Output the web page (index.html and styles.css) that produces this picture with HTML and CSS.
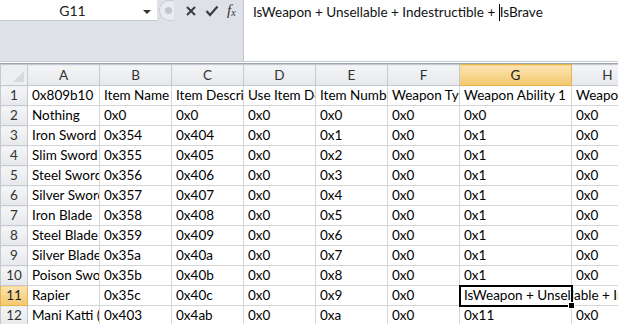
FILE: index.html
```html
<!DOCTYPE html>
<html lang="en">
<head>
<meta charset="UTF-8">
<title>Items</title>
<link rel="stylesheet" href="styles.css">
</head>
<body>
<div class="formula-bar">
    <div class="left-part">
        <div class="top-row">
            <div class="name-box">
                <span class="cell-ref">G11</span>
                <span class="drop-arrow"></span>
            </div>
            <div class="buttons">
                <span class="grip"><span class="dot"></span></span>
                <svg class="btn-icon" width="12" height="12" viewBox="0 0 12 12"><path d="M2 2 L10 10 M10 2 L2 10" stroke="#3c3c3c" stroke-width="2"/></svg>
                <svg class="btn-icon check" width="14" height="12" viewBox="0 0 14 12"><path d="M1.5 6 L5 10 L12.5 1.5" stroke="#3c3c3c" stroke-width="2.2" fill="none"/></svg>
                <span class="fx">f<sub>x</sub></span>
            </div>
        </div>
    </div>
    <div class="formula-input">IsWeapon + Unsellable + Indestructible + <span class="caret"></span>IsBrave</div>
</div>
<div class="splitter"></div>

<table class="sheet">
    <colgroup>
        <col class="c-head">
        <col class="c-std"><col class="c-std"><col class="c-std"><col class="c-std">
        <col class="c-std"><col class="c-std">
        <col class="c-wide">
        <col class="c-std">
    </colgroup>
    <thead>
        <tr>
            <th class="corner"><span class="tri"></span></th>
            <th>A</th><th>B</th><th>C</th><th>D</th><th>E</th><th>F</th><th class="sel">G</th><th>H</th>
        </tr>
    </thead>
    <tbody id="rows"></tbody>
</table>

<script>
    var data = [
        ['0x809b10', 'Item Name', 'Item Description', 'Use Item Desc', 'Item Number', 'Weapon Type', 'Weapon Ability 1', 'Weapon Ability 2'],
        ['Nothing', '0x0', '0x0', '0x0', '0x0', '0x0', '0x0', '0x0'],
        ['Iron Sword', '0x354', '0x404', '0x0', '0x1', '0x0', '0x1', '0x0'],
        ['Slim Sword', '0x355', '0x405', '0x0', '0x2', '0x0', '0x1', '0x0'],
        ['Steel Sword', '0x356', '0x406', '0x0', '0x3', '0x0', '0x1', '0x0'],
        ['Silver Sword', '0x357', '0x407', '0x0', '0x4', '0x0', '0x1', '0x0'],
        ['Iron Blade', '0x358', '0x408', '0x0', '0x5', '0x0', '0x1', '0x0'],
        ['Steel Blade', '0x359', '0x409', '0x0', '0x6', '0x0', '0x1', '0x0'],
        ['Silver Blade', '0x35a', '0x40a', '0x0', '0x7', '0x0', '0x1', '0x0'],
        ['Poison Sword', '0x35b', '0x40b', '0x0', '0x8', '0x0', '0x1', '0x0'],
        ['Rapier', '0x35c', '0x40c', '0x0', '0x9', '0x0', 'IsWeapon + Unsellable + Indestructible + IsBrave', ''],
        ['Mani Katti (', '0x403', '0x4ab', '0x0', '0xa', '0x0', '0x11', '0x0']
    ];

    var body = document.getElementById('rows');
    data.forEach(function(row, i) {
        var tr = document.createElement('tr');
        var th = document.createElement('th');
        th.textContent = i + 1;
        if (i == 10) th.className = 'sel';
        tr.appendChild(th);
        row.forEach(function(val, j) {
            var td = document.createElement('td');
            td.textContent = val;
            if (i == 10 && j == 6) td.className = 'active';
            tr.appendChild(td);
        });
        body.appendChild(tr);
    });
</script>
</body>
</html>
```

FILE: styles.css
```css
body {
    margin: 0;
    width: 618px;
    height: 324px;
    overflow: hidden;
    background: #fff;
    font-family: Lato, "Open Sans", sans-serif;
    font-size: 13.5px;
    color: #000;
}

.formula-bar {
    display: flex;
    height: 61px;
    background: #dee2e8;
}

.left-part {
    width: 243px;
}

.top-row {
    display: flex;
    height: 21px;
}

.name-box {
    width: 157px;
    background: #fff;
    position: relative;
    text-align: center;
    line-height: 22px;
    border-bottom: 1px solid #c6ccd4;
    box-sizing: border-box;
    font-size: 14px;
}

.cell-ref {
    margin-right: 12px;
    color: #222;
}

.drop-arrow {
    position: absolute;
    right: 6px;
    top: 10px;
    border-left: 4px solid transparent;
    border-right: 4px solid transparent;
    border-top: 4px solid #333;
}

.buttons {
    flex: 1;
    display: flex;
    align-items: center;
}

.grip {
    width: 14px;
    height: 19px;
    margin-left: 2px;
    border-radius: 10px 0 0 10px;
    border: 1px solid #c9ced6;
    border-right: none;
    background: #e8ebef;
    display: flex;
    align-items: center;
    justify-content: center;
}

.grip .dot {
    width: 7px;
    height: 7px;
    border-radius: 50%;
    background: #c3c6ca;
    margin-left: 3px;
}

.btn-icon {
    margin-left: 11px;
}

.btn-icon.check {
    margin-left: 8px;
}

.fx {
    font-family: "Liberation Serif", serif;
    font-style: italic;
    font-size: 15px;
    margin-left: 8px;
    color: #333;
}

.fx sub {
    font-size: 10px;
    vertical-align: -1px;
}

.formula-input {
    flex: 1;
    background: #fff;
    border-left: 1px solid #c3c8cf;
    padding: 2px 0 0 9px;
    line-height: 20px;
    color: #111;
}

.caret {
    display: inline-block;
    width: 1px;
    height: 17px;
    background: #000;
    vertical-align: -4px;
}

.splitter {
    height: 3px;
    background: #fff;
    border-top: 1px solid #c7ccd3;
    border-bottom: 1px solid #9ea5ae;
    box-sizing: border-box;
}

.sheet {
    border-collapse: collapse;
    table-layout: fixed;
    width: 643px;
}

.c-head { width: 27px; }
.c-std { width: 72px; }
.c-wide { width: 112px; }

.sheet th {
    height: 19px;
    padding: 0;
    font-weight: normal;
    color: #333;
    background: linear-gradient(#f4f5f7, #e6e8eb);
    border: 1px solid #c5c9cf;
    text-align: center;
    line-height: 19px;
}

.sheet thead th {
    height: 20px;
}

.sheet th.corner {
    position: relative;
    background: #eceef1;
}

.tri {
    position: absolute;
    right: 3px;
    bottom: 3px;
    border-left: 11px solid transparent;
    border-bottom: 11px solid #d6d9dd;
}

.sheet th.sel {
    background: linear-gradient(#fbe4b2, #f2c86e);
    border-color: #e7b54d;
    color: #222;
}

.sheet td {
    height: 19px;
    padding: 0 0 0 4px;
    border: 1px solid #d6d6d6;
    white-space: nowrap;
    overflow: hidden;
    line-height: 19px;
}

.sheet td.active {
    overflow: visible;
    position: relative;
    outline: 2px solid #000;
    outline-offset: -1px;
}

.sheet td.active::after {
    content: "";
    position: absolute;
    right: -4px;
    bottom: -4px;
    width: 5px;
    height: 5px;
    background: #000;
    border: 1px solid #fff;
}
```
